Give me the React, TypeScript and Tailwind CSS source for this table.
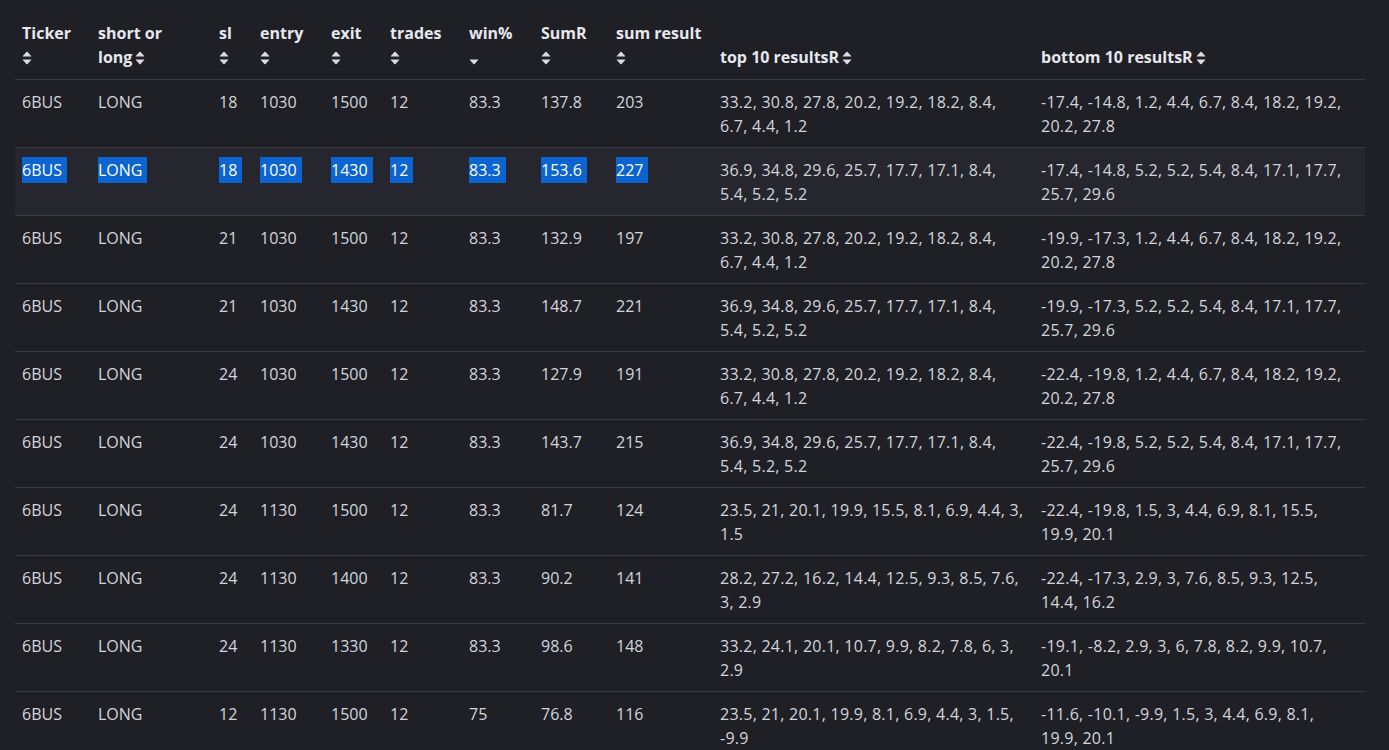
import React from "react";

type Row = {
  sl: string;
  entry: string;
  exit: string;
  winPct: string;
  sumR: string;
  sumResult: string;
  top: [string, string];
  bottom: [string, string];
};

const TOP_A: [string, string] = ["33.2, 30.8, 27.8, 20.2, 19.2, 18.2, 8.4,", "6.7, 4.4, 1.2"];
const TOP_B: [string, string] = ["36.9, 34.8, 29.6, 25.7, 17.7, 17.1, 8.4,", "5.4, 5.2, 5.2"];

const rows: Row[] = [
  { sl: "18", entry: "1030", exit: "1500", winPct: "83.3", sumR: "137.8", sumResult: "203", top: TOP_A, bottom: ["-17.4, -14.8, 1.2, 4.4, 6.7, 8.4, 18.2, 19.2,", "20.2, 27.8"] },
  { sl: "18", entry: "1030", exit: "1430", winPct: "83.3", sumR: "153.6", sumResult: "227", top: TOP_B, bottom: ["-17.4, -14.8, 5.2, 5.2, 5.4, 8.4, 17.1, 17.7,", "25.7, 29.6"] },
  { sl: "21", entry: "1030", exit: "1500", winPct: "83.3", sumR: "132.9", sumResult: "197", top: TOP_A, bottom: ["-19.9, -17.3, 1.2, 4.4, 6.7, 8.4, 18.2, 19.2,", "20.2, 27.8"] },
  { sl: "21", entry: "1030", exit: "1430", winPct: "83.3", sumR: "148.7", sumResult: "221", top: TOP_B, bottom: ["-19.9, -17.3, 5.2, 5.2, 5.4, 8.4, 17.1, 17.7,", "25.7, 29.6"] },
  { sl: "24", entry: "1030", exit: "1500", winPct: "83.3", sumR: "127.9", sumResult: "191", top: TOP_A, bottom: ["-22.4, -19.8, 1.2, 4.4, 6.7, 8.4, 18.2, 19.2,", "20.2, 27.8"] },
  { sl: "24", entry: "1030", exit: "1430", winPct: "83.3", sumR: "143.7", sumResult: "215", top: TOP_B, bottom: ["-22.4, -19.8, 5.2, 5.2, 5.4, 8.4, 17.1, 17.7,", "25.7, 29.6"] },
  { sl: "24", entry: "1130", exit: "1500", winPct: "83.3", sumR: "81.7", sumResult: "124", top: ["23.5, 21, 20.1, 19.9, 15.5, 8.1, 6.9, 4.4, 3,", "1.5"], bottom: ["-22.4, -19.8, 1.5, 3, 4.4, 6.9, 8.1, 15.5,", "19.9, 20.1"] },
  { sl: "24", entry: "1130", exit: "1400", winPct: "83.3", sumR: "90.2", sumResult: "141", top: ["28.2, 27.2, 16.2, 14.4, 12.5, 9.3, 8.5, 7.6,", "3, 2.9"], bottom: ["-22.4, -17.3, 2.9, 3, 7.6, 8.5, 9.3, 12.5,", "14.4, 16.2"] },
  { sl: "24", entry: "1130", exit: "1330", winPct: "83.3", sumR: "98.6", sumResult: "148", top: ["33.2, 24.1, 20.1, 10.7, 9.9, 8.2, 7.8, 6, 3,", "2.9"], bottom: ["-19.1, -8.2, 2.9, 3, 6, 7.8, 8.2, 9.9, 10.7,", "20.1"] },
  { sl: "12", entry: "1130", exit: "1500", winPct: "75", sumR: "76.8", sumResult: "116", top: ["23.5, 21, 20.1, 19.9, 8.1, 6.9, 4.4, 3, 1.5,", "-9.9"], bottom: ["-11.6, -10.1, -9.9, 1.5, 3, 4.4, 6.9, 8.1,", "19.9, 20.1"] },
];

const SELECTED = 1;

function SortIcon({ downOnly = false }: { downOnly?: boolean }) {
  return (
    <svg viewBox="0 0 10 14" className="inline-block h-[14px] w-[10px] align-[-2px] text-[#d9dbe1]" fill="currentColor">
      {!downOnly && <path d="M1 5.6 Q0.4 5.6 0.8 5 L4.4 1 Q5 0.4 5.6 1 L9.2 5 Q9.6 5.6 9 5.6 Z" />}
      <path d="M1 8.4 Q0.4 8.4 0.8 9 L4.4 13 Q5 13.6 5.6 13 L9.2 9 Q9.6 8.4 9 8.4 Z" />
    </svg>
  );
}

function Hl({ on, children }: { on: boolean; children: React.ReactNode }) {
  if (!on) return <>{children}</>;
  return <span className="inline-block bg-[#0b64d0] pr-[5px] leading-[26px] -my-px text-white">{children}</span>;
}

export default function App() {
  const th = "px-[7px] pt-[10px] pb-[10px] text-left align-bottom font-bold text-[#e6e8ee]";
  const td = "px-[7px] pt-[10px] pb-[9px] align-top";
  return (
    <div
      className="min-h-screen overflow-hidden bg-[#1f2025] pt-[11px] text-[16px] leading-6 text-[#d3d5dc]"
      style={{ fontFamily: '"Open Sans", "Noto Sans", sans-serif' }}
    >
      <table className="ml-[15px] w-[1350px] table-fixed border-collapse">
        <colgroup>
          <col className="w-[76px]" />
          <col className="w-[121px]" />
          <col className="w-[41px]" />
          <col className="w-[71px]" />
          <col className="w-[59px]" />
          <col className="w-[79px]" />
          <col className="w-[72px]" />
          <col className="w-[75px]" />
          <col className="w-[104px]" />
          <col className="w-[321px]" />
          <col className="w-[331px]" />
        </colgroup>
        <thead>
          <tr className="border-b border-[#393a43]">
            <th className={th}>
              Ticker
              <br />
              <SortIcon />
            </th>
            <th className={th}>
              short or
              <br />
              long<span className="ml-[3px]"><SortIcon /></span>
            </th>
            <th className={th}>
              sl
              <br />
              <SortIcon />
            </th>
            <th className={th}>
              entry
              <br />
              <SortIcon />
            </th>
            <th className={th}>
              exit
              <br />
              <SortIcon />
            </th>
            <th className={th}>
              trades
              <br />
              <SortIcon />
            </th>
            <th className={th}>
              win%
              <br />
              <SortIcon downOnly />
            </th>
            <th className={th}>
              SumR
              <br />
              <SortIcon />
            </th>
            <th className={th}>
              <span className="whitespace-nowrap">sum result</span>
              <br />
              <SortIcon />
            </th>
            <th className={th}>
              <span className="whitespace-nowrap">
                top 10 resultsR<span className="ml-[3px]"><SortIcon /></span>
              </span>
            </th>
            <th className={th}>
              <span className="whitespace-nowrap">
                bottom 10 resultsR<span className="ml-[3px]"><SortIcon /></span>
              </span>
            </th>
          </tr>
        </thead>
        <tbody>
          {rows.map((r, i) => {
            const sel = i === SELECTED;
            return (
              <tr key={i} className={`border-b border-[#393a43] ${sel ? "bg-[#26272e]" : ""}`}>
                <td className={td}><Hl on={sel}>6BUS</Hl></td>
                <td className={td}><Hl on={sel}>LONG</Hl></td>
                <td className={td}><Hl on={sel}>{r.sl}</Hl></td>
                <td className={td}><Hl on={sel}>{r.entry}</Hl></td>
                <td className={td}><Hl on={sel}>{r.exit}</Hl></td>
                <td className={td}><Hl on={sel}>12</Hl></td>
                <td className={td}><Hl on={sel}>{r.winPct}</Hl></td>
                <td className={td}><Hl on={sel}>{r.sumR}</Hl></td>
                <td className={td}><Hl on={sel}>{r.sumResult}</Hl></td>
                <td className={`${td} whitespace-nowrap tracking-[0.25px]`}>
                  {r.top[0]}
                  <br />
                  {r.top[1]}
                </td>
                <td className={`${td} whitespace-nowrap tracking-[0.25px]`}>
                  {r.bottom[0]}
                  <br />
                  {r.bottom[1]}
                </td>
              </tr>
            );
          })}
        </tbody>
      </table>
    </div>
  );
}
